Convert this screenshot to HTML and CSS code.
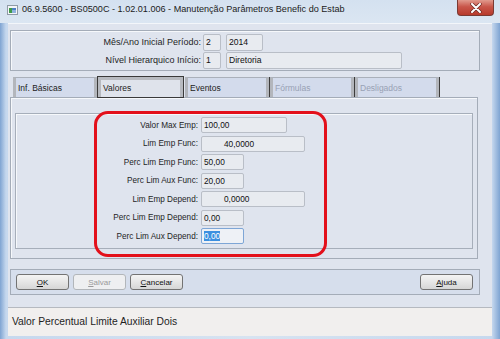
FILE: index.html
```html
<!DOCTYPE html>
<html lang="pt">
<head>
    <meta charset="UTF-8">
    <title>Manutenção Parâmetros Benefic do Estab</title>
    <link rel="stylesheet" href="styles.css">
</head>
<body>
<div class="window">
    <div class="titlebar">
        <svg class="app-icon" width="11" height="10" viewBox="0 0 11 10">
            <rect x="0.5" y="0.5" width="10" height="9" fill="#f4f6f8" stroke="#8f9aa6"/>
            <rect x="2" y="3" width="3" height="5" fill="#3f9a4a"/>
            <rect x="5" y="3" width="4" height="2" fill="#4d7fc4"/>
            <rect x="5" y="5" width="4" height="3" fill="#8fb3de"/>
        </svg>
        <span class="title">06.9.5600 - BS0500C - 1.02.01.006 - Manutenção Parâmetros Benefic do Estab</span>
        <div class="close-btn">
            <svg width="12" height="10" viewBox="0 0 12 10">
                <path d="M2 1 L10 9 M10 1 L2 9" stroke="#6b2a24" stroke-width="3.4" stroke-linecap="round"/>
                <path d="M2 1 L10 9 M10 1 L2 9" stroke="#ffffff" stroke-width="2" stroke-linecap="round"/>
            </svg>
        </div>
    </div>

    <div class="client">
        <div class="head-panel">
            <div class="head-row">
                <span class="head-label">Mês/Ano Inicial Período:</span>
                <span class="field small">2</span>
                <span class="field year">2014</span>
            </div>
            <div class="head-row">
                <span class="head-label">Nível Hierarquico Início:</span>
                <span class="field small">1</span>
                <span class="field desc">Diretoria</span>
            </div>
        </div>

        <div class="tabs">
            <div class="tab">Inf. Básicas</div>
            <div class="tab active">Valores</div>
            <div class="tab">Eventos</div>
            <div class="tab disabled">Fórmulas</div>
            <div class="tab disabled">Desligados</div>
        </div>

        <div class="tab-panel">
            <div class="group">
                <div class="row">
                    <span class="label">Valor Max Emp:</span>
                    <span class="field mid">100,00</span>
                </div>
                <div class="row">
                    <span class="label">Lim Emp Func:</span>
                    <span class="field wide num">40,0000</span>
                </div>
                <div class="row">
                    <span class="label">Perc Lim Emp Func:</span>
                    <span class="field short">50,00</span>
                </div>
                <div class="row">
                    <span class="label">Perc Lim Aux Func:</span>
                    <span class="field short">20,00</span>
                </div>
                <div class="row">
                    <span class="label">Lim Emp Depend:</span>
                    <span class="field wide num">0,0000</span>
                </div>
                <div class="row">
                    <span class="label">Perc Lim Emp Depend:</span>
                    <span class="field short">0,00</span>
                </div>
                <div class="row">
                    <span class="label">Perc Lim Aux Depend:</span>
                    <span class="field short focus"><span class="sel">0,00</span></span>
                </div>
                <div class="highlight"></div>
            </div>
        </div>

        <div class="button-bar">
            <button class="btn"><u>O</u>K</button>
            <button class="btn" disabled><u>S</u>alvar</button>
            <button class="btn"><u>C</u>ancelar</button>
            <button class="btn help"><u>A</u>juda</button>
        </div>

        <div class="status">Valor Percentual Limite Auxiliar Dois</div>
    </div>
</div>
</body>
</html>
```

FILE: styles.css
```css
body {
    margin: 0;
    font-family: "Liberation Sans", Arial, sans-serif;
    background: #b7cde6;
}
.window {
    width: 500px;
    height: 339px;
    box-sizing: border-box;
    padding: 0 8px 3px 8px;
    display: flex;
    flex-direction: column;
    background: linear-gradient(90deg, #7fa4d2 0px, #c6d8ee 6px, #d7e3f1 50%, #c6d8ee 492px, #7fa4d2 500px);
}
.titlebar {
    height: 23px;
    display: flex;
    align-items: flex-start;
    margin: 0 -8px;
    padding: 0 6px 0 7px;
    background: linear-gradient(#d4e1f0, #dbe6f2);
}
.app-icon {
    margin-top: 5px;
}
.title {
    margin: 4px 0 0 4px;
    font-size: 9.1px;
    color: #1b1b1b;
    white-space: nowrap;
}
.close-btn {
    margin-left: auto;
    width: 37px;
    height: 16px;
    box-sizing: border-box;
    border: 1px solid #7a3a33;
    border-top: none;
    border-radius: 0 0 4px 4px;
    background: linear-gradient(#e19a8d, #c9564a 45%, #b73a2c);
    display: flex;
    justify-content: center;
    align-items: center;
}
.client {
    flex: 1;
    display: flex;
    flex-direction: column;
    background: #dfe4ee;
    border-top: 1px solid #f3f6fa;
}
.head-panel {
    margin: 6px 12px 0 2px;
    height: 41px;
    box-sizing: border-box;
    border: 1px solid #a4acb8;
    box-shadow: inset 1px 1px 0 #f6f8fb;
    padding-top: 2px;
}
.head-row {
    display: flex;
    align-items: center;
    height: 18px;
}
.head-label {
    width: 190px;
    text-align: right;
    font-size: 9px;
    color: #1e1e1e;
    margin-right: 2px;
}
.field {
    height: 16px;
    box-sizing: border-box;
    border: 1px solid #b9bec7;
    border-radius: 2px;
    background: #e8ebf0;
    font-size: 8.3px;
    color: #111;
    padding-left: 2px;
    display: flex;
    align-items: center;
}
.head-row .field {
    height: 17px;
    font-size: 8.6px;
}
.field.small {
    width: 18px;
    margin-right: 5px;
}
.field.year {
    width: 37px;
}
.field.desc {
    width: 176px;
}
.tabs {
    display: flex;
    margin: 6px 0 0 5px;
    height: 20px;
}
.tab {
    width: 84px;
    margin-right: 1px;
    box-sizing: border-box;
    background: #d3dbec;
    border-top: 1px solid #aab0ba;
    border-left: 3px solid #b3b6bc;
    border-right: 3px solid #b3b6bc;
    box-shadow: 1px 0 0 #3c3c3c;
    font-size: 8.5px;
    color: #222;
    padding: 5px 0 0 2px;
}
.tab.active {
    width: 85px;
    margin-right: 2px;
    background: #dfe3eb;
    border: 3px solid #b7bac0;
    border-bottom: none;
    box-shadow: 0 0 0 1px #3a3a3a;
    position: relative;
    z-index: 1;
    padding-top: 3px;
}
.tab.disabled {
    color: #98a1b4;
}
.tab-panel {
    margin-left: 2px;
    width: 468px;
    height: 162px;
    box-sizing: border-box;
    border: 1px solid #a4acb8;
    box-shadow: inset 1px 1px 0 #f6f8fb;
    padding: 15px 0 0 4px;
}
.group {
    position: relative;
    width: 458px;
    height: 136px;
    box-sizing: border-box;
    border: 1px solid #a6aeba;
    box-shadow: inset 1px 1px 0 #f6f8fb;
    padding-top: 2px;
}
.row {
    display: flex;
    align-items: center;
    height: 18.5px;
}
.label {
    width: 182px;
    margin-right: 3px;
    text-align: right;
    font-size: 8.2px;
    color: #1e1e1e;
}
.field.mid {
    width: 86px;
}
.field.wide {
    width: 104px;
}
.field.num {
    padding-left: 22px;
}
.field.short {
    width: 43px;
}
.field.focus {
    border-color: #7ea6d6;
    background: #eef1f6;
}
.sel {
    background: #3b8fe0;
    color: #fff;
}
.highlight {
    position: absolute;
    left: 78px;
    top: -3px;
    width: 233px;
    height: 146px;
    box-sizing: border-box;
    border: 3px solid #e3101b;
    border-radius: 14px;
    pointer-events: none;
}
.button-bar {
    margin: 10px 12px 0 2px;
    height: 26px;
    box-sizing: border-box;
    border: 1px solid #a4acb8;
    background: #d6deec;
    display: flex;
    align-items: center;
    padding-left: 5px;
    gap: 4px;
}
.btn {
    width: 53px;
    height: 16px;
    padding: 0;
    font-family: "Liberation Sans", Arial, sans-serif;
    font-size: 8px;
    color: #111;
    border: 1px solid #737373;
    border-radius: 3px;
    background: linear-gradient(#f4f4f4, #e6e6e6 50%, #d6d6d6);
}
.btn:disabled {
    color: #9a9a9a;
    border-color: #b2b6ba;
    background: #eeeff1;
}
.btn.help {
    margin-left: auto;
    margin-right: 6px;
}
.status {
    margin-top: auto;
    height: 29px;
    box-sizing: border-box;
    border-top: 1px solid #b5b9c0;
    background: #f1efee;
    font-size: 10.3px;
    color: #1e1e1e;
    padding: 8px 0 0 4px;
}
```
